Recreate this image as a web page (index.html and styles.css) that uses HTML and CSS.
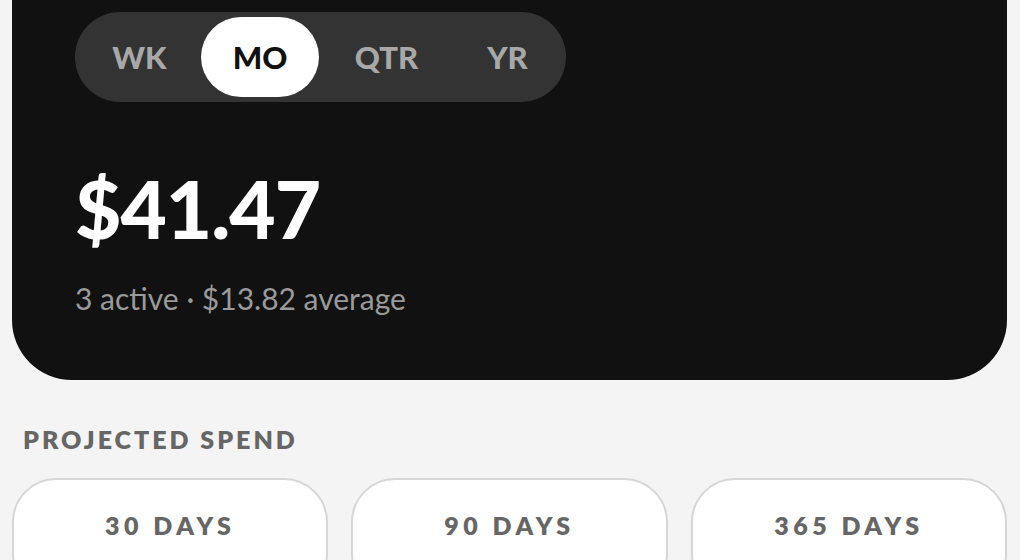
FILE: index.html
```html
<!DOCTYPE html>
<html lang="en">
<head>
	<meta charset="UTF-8">
	<title>Spending</title>
	<link rel="stylesheet" href="styles.css">
</head>
<body>
	<div class="hero">
		<div class="seg">
			<div class="seg-item">WK</div>
			<div class="seg-item on">MO</div>
			<div class="seg-item">QTR</div>
			<div class="seg-item">YR</div>
		</div>
		<div class="total">$41.47</div>
		<div class="sub">3 active · $13.82 average</div>
	</div>
	<div class="label">PROJECTED SPEND</div>
	<div class="cards">
		<div class="card"><div class="card-title">30 DAYS</div></div>
		<div class="card"><div class="card-title">90 DAYS</div></div>
		<div class="card"><div class="card-title">365 DAYS</div></div>
	</div>
</body>
</html>
```

FILE: styles.css
```css
html,body{
	margin: 0;
	padding: 0;
}
body{
	background: #f4f4f4;
	font-family: "Lato", "Liberation Sans", sans-serif;
	padding: 0 13px 0 12px;
	height: 560px;
	overflow: hidden;
}
.hero{
	background: #111111;
	border-radius: 0 0 60px 60px;
	padding: 12px 63px 64px 63px;
}
.seg{
	display: inline-flex;
	gap: 2px;
	background: #333333;
	border-radius: 45px;
	padding: 5px;
}
.seg-item{
	height: 80px;
	line-height: 80px;
	border-radius: 40px;
	text-align: center;
	font-size: 31px;
	font-weight: 900;
	color: #a8a8a8;
	width: 118px;
}
.seg-item:nth-child(1){ width: 119px; }
.seg-item:nth-child(3){ width: 131px; }
.seg-item:nth-child(4){ width: 107px; }
.seg-item.on{
	background: #ffffff;
	color: #111111;
}
.total{
	margin-top: 66px;
	font-size: 80px;
	line-height: 80px;
	font-weight: 900;
	letter-spacing: -1px;
	color: #ffffff;
}
.sub{
	margin-top: 32px;
	font-size: 30px;
	line-height: 36px;
	color: #9a9a9a;
}
.label{
	margin-top: 44px;
	padding-left: 11px;
	font-size: 25px;
	line-height: 30px;
	font-weight: 800;
	letter-spacing: 3px;
	color: #666666;
}
.cards{
	display: flex;
	gap: 23px;
	margin-top: 24px;
}
.card{
	flex: 1;
	height: 120px;
	background: #ffffff;
	border: 2px solid #d6d6d6;
	border-radius: 44px;
	padding-top: 30px;
	box-sizing: border-box;
}
.card-title{
	text-align: center;
	font-size: 25px;
	line-height: 30px;
	font-weight: 800;
	letter-spacing: 4.5px;
	color: #666666;
}
```
